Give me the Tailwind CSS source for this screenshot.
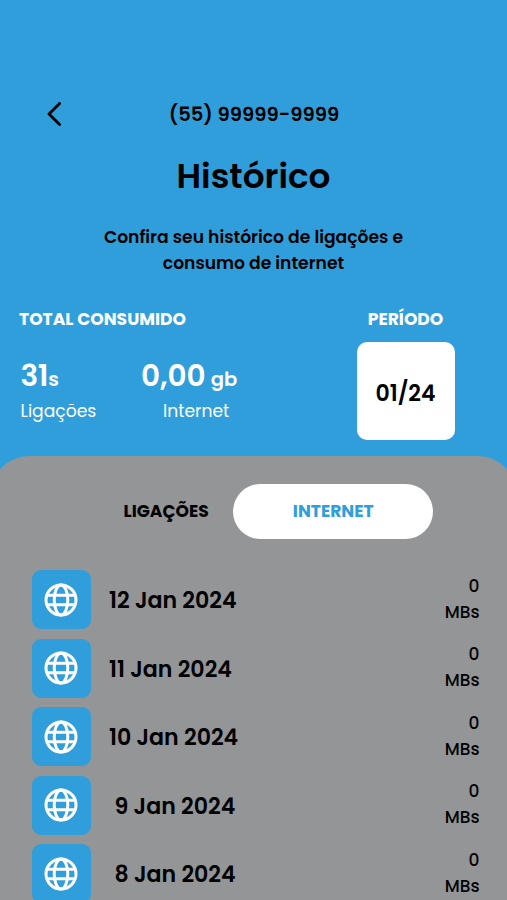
<!DOCTYPE html>
<html lang="pt-BR">
<head>
    <meta charset="UTF-8">
    <meta name="viewport" content="width=device-width, initial-scale=1.0">
    <title>Histórico</title>
    <script src="https://cdn.jsdelivr.net/npm/@tailwindcss/browser@4"></script>
</head>
<body class="h-[900px] overflow-hidden bg-[#309eda] font-['Poppins','Inter',sans-serif] text-black">

  <div class="flex h-[900px] flex-col overflow-hidden">
    <header class="grid h-[28px] shrink-0 grid-cols-[1fr_auto_1fr] items-center mt-[100px]">
      <a href="#" aria-label="Voltar" class="pl-[47px]">
        <svg class="h-[25px] w-[16px]" viewBox="0 0 16 25" fill="none" stroke="currentColor" stroke-width="2.8" stroke-linecap="round" stroke-linejoin="round">
          <path d="M12.6 1.4 2 12 12.6 22.6"/>
        </svg>
      </a>
      <span class="pl-px text-[19.6px] font-semibold">(55) 99999-9999</span>
    </header>

    <h1 class="mt-[28px] h-[40px] shrink-0 text-center text-[34.3px] leading-[41px] font-semibold">Histórico</h1>
    <p class="mt-[29px] h-[50.5px] shrink-0 text-center text-[17.15px] leading-[25.7px] font-semibold">Confira seu histórico de ligações e<br>consumo de internet</p>

    <section class="mt-[25px] flex h-[147.5px] shrink-0 pl-[19px] text-white">
      <div class="w-[337.5px]">
        <h2 class="mt-1.5 text-[17.15px] leading-6 font-bold">TOTAL CONSUMIDO</h2>
        <div class="mt-[25px] flex">
          <div class="w-[122px] pl-[1.5px]">
            <p class="h-10 text-[29.5px] leading-[40px] font-semibold tracking-[-0.3px]">31<span class="text-[19.5px]">s</span></p>
            <p class="mt-[3px] text-[17.15px] leading-6">Ligações</p>
          </div>
          <div>
            <p class="h-10 text-[29.5px] leading-[40px] font-semibold">0,00<span class="ml-[5px] text-[19.5px]">gb</span></p>
            <p class="mt-[3px] pl-[22px] text-[17.15px] leading-6">Internet</p>
          </div>
        </div>
      </div>
      <div class="w-[98px] text-center">
        <h2 class="mt-1.5 text-[17.15px] leading-6 font-bold">PERÍODO</h2>
        <div class="mt-[11px] flex h-[98px] items-center justify-center rounded-[10px] bg-white pt-[5px] text-[22px] font-semibold text-black">01/24</div>
      </div>
    </section>

    <main class="-mx-[9px] mt-[8px] grow rounded-t-[38px] bg-[#939597] pt-[27.5px] pr-[36.5px] pl-[40.5px]">
      <div class="flex h-[55px] items-center pl-[92px] text-[17.15px] font-bold">
        <button class="w-[109.5px] pt-[1.5px] text-left">LIGAÇÕES</button>
        <button class="h-[55px] w-[199.5px] rounded-full bg-white pt-[1.5px] pl-px text-[#309eda]">INTERNET</button>
      </div>

      <ul id="historyList" class="mt-[31.5px] space-y-[9.5px]"></ul>
    </main>
  </div>

<script>
const history2024 = [
    ["12 Jan 2024", 0],
    ["11 Jan 2024", 0],
    ["10 Jan 2024", 0],
    ["9 Jan 2024", 0],
    ["8 Jan 2024", 0]
];

const historyList = document.getElementById('historyList');

history2024.forEach(([date, usage]) => {
    const item = document.createElement('li');
    item.className = 'flex h-[59px] items-center';

    // one digit days are pushed a bit to the right
    const padding = date.length < 11 ? 'pl-[24px]' : 'pl-[18.5px]';

    item.innerHTML = `
        <div class="flex h-[59px] w-[59px] items-center justify-center rounded-[9px] bg-[#309eda]">
            <svg class="h-[34px] w-[34px]" viewBox="0 0 34 34" fill="none" stroke="#fff" stroke-width="3">
                <circle cx="17" cy="17" r="15"/>
                <ellipse cx="17" cy="17" rx="6.8" ry="15"/>
                <path d="M2.8 12.2h28.4M2.8 21.8h28.4"/>
            </svg>
        </div>
        <span class="${padding} grow pt-[3px] text-[22.1px] font-semibold">${date}</span>
        <span class="pb-[2px] text-right text-[17px] leading-[26px] font-medium">${usage}<br>MBs</span>
    `;

    historyList.appendChild(item);
});
</script>
</body>
</html>
